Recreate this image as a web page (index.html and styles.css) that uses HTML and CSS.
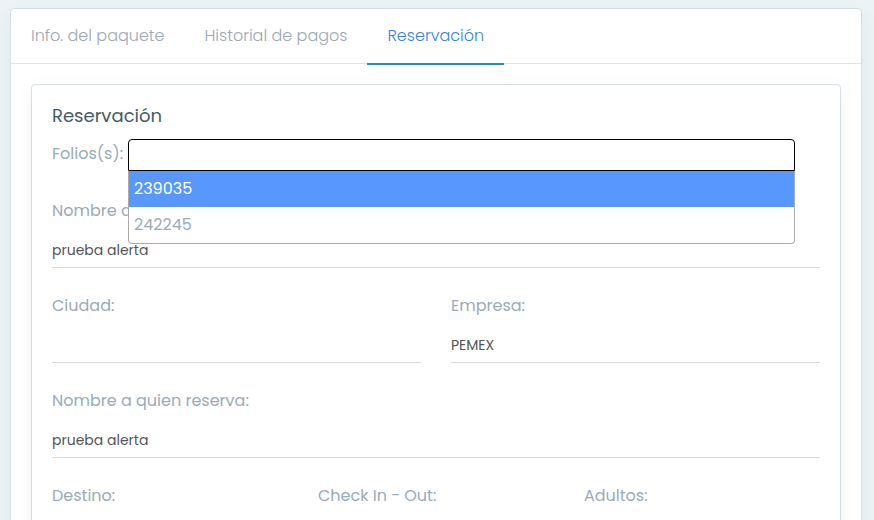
FILE: index.html
```html
<!DOCTYPE html>
<html lang="es">
<head>
<meta charset="utf-8">
<meta name="viewport" content="width=device-width, initial-scale=1">
<title>Reservación</title>
<link rel="stylesheet" href="styles.css">
</head>
<body>
<main class="card">
  <nav class="tabs">
    <a class="tab" href="#info">Info. del paquete</a>
    <a class="tab" href="#pagos">Historial de pagos</a>
    <a class="tab active" href="#reservacion" aria-current="page">Reservación</a>
  </nav>
  <div class="card-body">
    <form class="card panel">
      <h1 class="title">Reservación</h1>
      <div class="folios">
        <label class="label" for="folios">Folios(s):</label>
        <div class="picker">
          <input class="picker-input" id="folios" type="text" role="combobox" aria-expanded="true" aria-controls="folio-options" autocomplete="off">
          <ul class="options" id="folio-options" role="listbox">
            <li class="option highlighted" role="option" aria-selected="true">239035</li>
            <li class="option" role="option" aria-selected="false">242245</li>
          </ul>
        </div>
      </div>
      <div class="row">
        <div class="field">
          <label class="label" for="titular">Nombre a quien reserva:</label>
          <input class="control" id="titular" type="text" value="prueba alerta">
        </div>
      </div>
      <div class="row">
        <div class="field">
          <label class="label" for="ciudad">Ciudad:</label>
          <input class="control" id="ciudad" type="text">
        </div>
        <div class="field">
          <label class="label" for="empresa">Empresa:</label>
          <input class="control" id="empresa" type="text" value="PEMEX">
        </div>
      </div>
      <div class="row">
        <div class="field">
          <label class="label" for="reserva">Nombre a quien reserva:</label>
          <input class="control" id="reserva" type="text" value="prueba alerta">
        </div>
      </div>
      <div class="row">
        <div class="field">
          <label class="label" for="destino">Destino:</label>
          <input class="control" id="destino" type="text">
        </div>
        <div class="field">
          <label class="label" for="fechas">Check In - Out:</label>
          <input class="control" id="fechas" type="text">
        </div>
        <div class="field">
          <label class="label" for="adultos">Adultos:</label>
          <input class="control" id="adultos" type="text">
        </div>
      </div>
    </form>
  </div>
</main>
</body>
</html>
```
FILE: styles.css
```css
* {
  box-sizing: border-box;
}

body {
  height: 100vh;
  margin: 0;
  padding: 8px 12px 0 10px;
  overflow: hidden;
  background: #ebf3f7;
  color: #99abb8;
  font: 300 16px/24px Poppins, Inter, sans-serif;
}

.card {
  border: 1px solid #d5dfe3;
  border-radius: 4px;
  background: #fff;
  box-shadow: 0 5px 20px rgba(0, 0, 0, 0.05);
}

.tabs {
  display: flex;
  border-bottom: 1px solid #dee2e6;
}

.tab {
  margin-bottom: -2px;
  padding: 15px 20px;
  border-bottom: 2px solid transparent;
  color: #99a8b4;
  text-decoration: none;
}

.tab.active {
  border-color: #1e88e5;
  color: #3a80ea;
}

.card-body {
  padding: 20px;
}

.panel {
  padding: 20px;
}

.title {
  margin: 0 0 12px;
  color: #455a64;
  font-size: 18px;
  font-weight: 400;
  line-height: 22px;
}

.folios {
  display: grid;
  grid-template-columns: 76px 1fr;
  margin: 0 25px 28px 0;
}

.label {
  display: block;
  font-weight: 400;
}

.folios .label {
  padding-top: 3px;
}

.picker {
  position: relative;
}

.picker-input {
  display: block;
  width: 100%;
  height: 32px;
  padding: 0 5px;
  border: 1px solid #000;
  border-radius: 4px 4px 0 0;
  outline: 0;
  font: inherit;
}

.options {
  position: absolute;
  z-index: 1;
  top: 100%;
  right: 0;
  left: 0;
  margin: 0;
  padding: 0;
  border: 1px solid #aaa;
  border-top: 0;
  border-radius: 0 0 4px 4px;
  background: #fff;
  list-style: none;
}

.option {
  padding: 6px 5px;
  font-weight: 400;
}

.option.highlighted {
  background: #5897fb;
  color: #fff;
}

.row {
  display: grid;
  grid-auto-columns: 1fr;
  grid-auto-flow: column;
  gap: 30px;
  margin-bottom: 26px;
}

.field .label {
  margin-bottom: 7px;
}

.control {
  display: block;
  width: 100%;
  height: 38px;
  padding: 4px 0 0;
  border: 0;
  border-bottom: 1px solid #d9d9d9;
  outline: 0;
  background: transparent;
  color: #54545a;
  font: 400 14px/21px Poppins, Inter, sans-serif;
}
```
